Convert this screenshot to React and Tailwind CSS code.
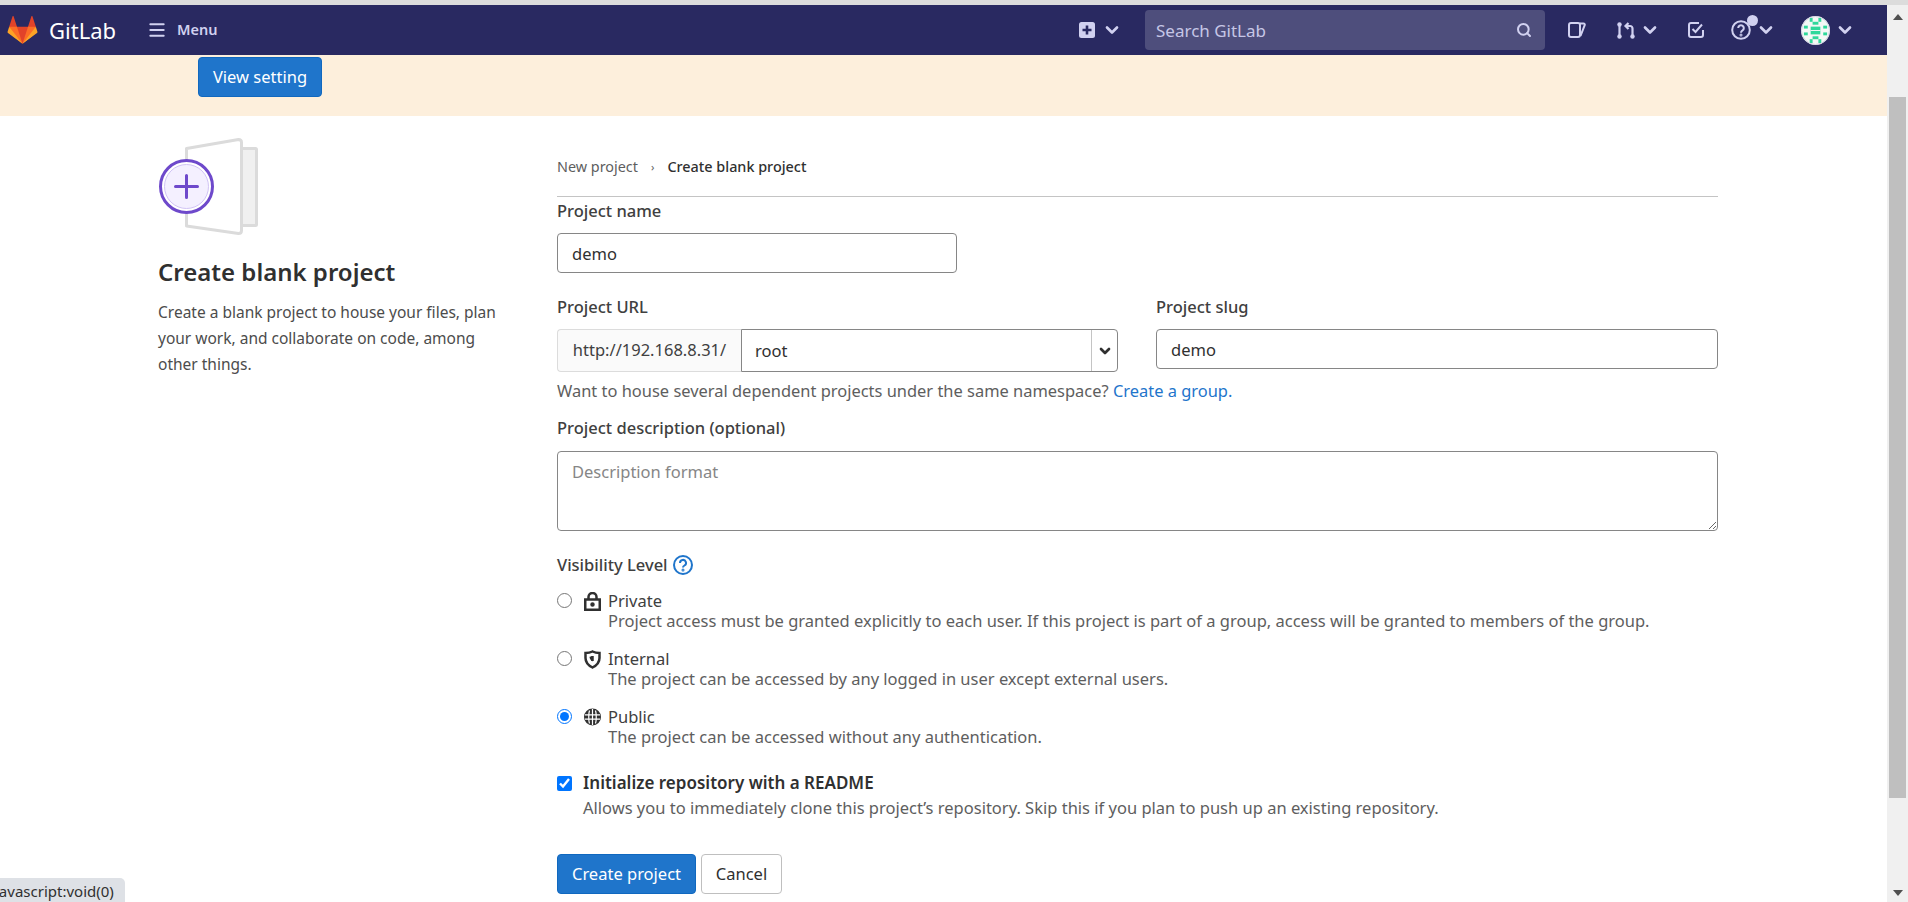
import React from 'react';
import { ChevronDown, Search, Menu } from 'lucide-react';

const Chev = ({ className = '' }) => <ChevronDown className={`w-5 h-5 ${className}`} strokeWidth={3.2} />;

const Logo = () => (
  <svg width="31" height="30" viewBox="0 0 36 36">
    <path fill="#e24329" d="M2 14l9.38 9v-9l-4-12.28c-.205-.632-1.176-.632-1.38 0z" />
    <path fill="#e24329" d="M34 14l-9.38 9v-9l4-12.28c.205-.632 1.176-.632 1.38 0z" />
    <path fill="#e24329" d="M18,34.38 3,14 33,14 Z" />
    <path fill="#fc6d26" d="M18,34.38 11.38,14 2,14 6,25Z" />
    <path fill="#fc6d26" d="M18,34.38 24.62,14 34,14 30,25Z" />
    <path fill="#fca326" d="M2 14L.1 20.16c-.18.565 0 1.2.5 1.56l17.42 12.66z" />
    <path fill="#fca326" d="M34 14l1.9 6.16c.18.565 0 1.2-.5 1.56L18 34.38z" />
  </svg>
);

const Avatar = () => (
  <svg width="29" height="29" viewBox="0 0 30 30">
    <circle cx="15" cy="15" r="15" fill="#f4f8f6" />
    <g fill="#2fd89b">
      <rect x="9" y="2" width="3" height="4" /><rect x="18" y="2" width="3" height="4" />
      <rect x="12" y="6" width="6" height="3" />
      <rect x="3" y="10" width="4" height="3" /><rect x="23" y="10" width="4" height="3" />
      <rect x="10" y="11" width="10" height="8" />
      <rect x="3" y="17" width="4" height="3" /><rect x="23" y="17" width="4" height="3" />
      <rect x="12" y="21" width="6" height="3" />
      <rect x="9" y="24" width="3" height="4" /><rect x="18" y="24" width="3" height="4" />
    </g>
    <path d="M10 15h10" stroke="#f4f8f6" strokeWidth="1" />
    <circle cx="15" cy="15" r="14.500" fill="none" stroke="#cfcfe0" />
  </svg>
);

const VisRow = ({ checked, icon, title, desc }) => (
  <div className="flex h-[58px]">
    <input type="radio" name="vis" defaultChecked={checked} className="w-[15px] h-[15px] mt-[4px] accent-[#0075ff]" />
    <div className="ml-[12px] w-[17px] pt-[3px] text-[#303030]">{icon}</div>
    <div className="ml-[7px]">
      <div className="text-[#404040] pt-[2px] leading-[20px]">{title}</div>
      <div className="text-[#5e5e5e] leading-[19px]">{desc}</div>
    </div>
  </div>
);

export default function App() {
  return (
    <div className="h-screen overflow-hidden flex flex-col bg-white relative text-[16.5px] text-[#303030]" style={{ fontFamily: '"Noto Sans", sans-serif' }}>
      <div className="h-[5px] bg-[#dcdcdc] shrink-0" />
      <div className="flex flex-1 min-h-0">
        <div className="flex-1 min-w-0">
          {/* Navbar */}
          <nav className="h-[50px] bg-[#292961] flex items-center">
            <div className="ml-[7px]"><Logo /></div>
            <span className="ml-[11px] text-[22px] text-white">GitLab</span>
            <Menu className="ml-[31px] w-[20px] h-[20px] text-[#d1d1f0]" strokeWidth={2.4} />
            <span className="ml-[10px] text-[14.5px] font-semibold text-[#d1d1f0]">Menu</span>
            <div className="ml-auto flex items-center text-[#d1d1f0]">
              <svg width="16" height="16" viewBox="0 0 16 16"><rect x="0" y="0" width="16" height="16" rx="2.500" fill="#d1d1f0" /><path d="M8 3.500v9M3.500 8h9" stroke="#292961" strokeWidth="2.600" /></svg>
              <Chev className="ml-[7px]" />
              <div className="ml-[23px] w-[400px] h-[40px] rounded-[4px] bg-[#4e4e7c] flex items-center pl-[11px] pr-[13px]">
                <span className="text-[17px] pt-[2px] text-[#c6c6e6]">Search GitLab</span>
                <Search className="ml-auto w-[16px] h-[16px] text-[#d1d1f0]" strokeWidth={3} />
              </div>
              <svg className="ml-[23px]" width="18" height="16" viewBox="0 0 18 16" fill="none" stroke="#d1d1f0" strokeWidth="2"><rect x="1" y="1" width="11" height="14" rx="2" /><path d="M12 1.500h3.500c1 0 1.500.8 1.200 1.600L12.500 14" /></svg>
              <svg className="ml-[31px]" width="18" height="17" viewBox="0 0 18 17" fill="none" stroke="#d1d1f0" strokeWidth="2.200"><circle cx="2.500" cy="2.500" r="2.200" fill="#d1d1f0" stroke="none" /><circle cx="2.500" cy="14.500" r="2.200" fill="#d1d1f0" stroke="none" /><circle cx="15.500" cy="14.500" r="2.200" fill="#d1d1f0" stroke="none" /><path d="M2.500 3v11M15.500 13V6.500c0-1.500-1-2.500-2.500-2.500H9M11.500 1 8.500 4l3 3" /></svg>
              <Chev className="ml-[5px]" />
              <svg className="ml-[28px]" width="16" height="16" viewBox="0 0 16 16" fill="none" stroke="#d1d1f0" strokeWidth="2"><path d="M15 8v5a2 2 0 0 1-2 2H3a2 2 0 0 1-2-2V3a2 2 0 0 1 2-2h8" /><path d="M4.500 7l3 3L14 2.500" /></svg>
              <div className="ml-[27px] relative w-[20px] h-[20px]">
                <svg width="20" height="20" viewBox="0 0 20 20" fill="none" stroke="#d1d1f0" strokeWidth="2"><circle cx="10" cy="10" r="8.800" /><path d="M7.200 8a2.800 2.800 0 1 1 4.300 2.400c-1 .6-1.500 1-1.500 2.300" /><circle cx="10" cy="15" r="0.500" /></svg>
                <span className="absolute -top-[5px] -right-[7px] w-[11px] h-[11px] rounded-full bg-[#d1d1f0]" />
              </div>
              <Chev className="ml-[5px]" />
              <div className="ml-[25px]"><Avatar /></div>
              <Chev className="ml-[5px] mr-[32px]" />
            </div>
          </nav>

          {/* Banner */}
          <div className="h-[61px] bg-[#fdefdc] pl-[198px] pt-[2px]">
            <button className="w-[124px] h-[40px] rounded-[4px] bg-[#1f75cb] border border-[#1068bf] text-white">View setting</button>
          </div>

          {/* Content */}
          <div className="flex">
            <div className="w-[557px] pl-[158px] pt-[20px] shrink-0">
              <svg width="102" height="100" viewBox="0 0 102 100" fill="none" className="block">
                <path d="M84 12.500h13.500a1 1 0 0 1 1 1v75a1 1 0 0 1-1 1H84" fill="#f0f0f0" stroke="#dbdbdb" strokeWidth="3" />
                <path d="M28.500 12.500l52-9c2 0 3 1 3 3v88c0 2-1 3-3 3l-52-7.500z" fill="#fff" stroke="#dbdbdb" strokeWidth="3" strokeLinejoin="round" />
                <circle cx="28.500" cy="50.500" r="26" fill="#fff" stroke="#6e49cb" strokeWidth="3" />
                <circle cx="28.500" cy="50.500" r="22" fill="#f4f0ff" stroke="#d1c4f5" />
                <path d="M28.500 39.500v22M17.500 50.500h22" stroke="#6e49cb" strokeWidth="3" strokeLinecap="round" />
              </svg>
              <h1 className="mt-[20px] text-[24px] leading-[32px] font-semibold text-[#303030]">Create blank project</h1>
              <p className="mt-[11px] text-[15.5px] leading-[26px] text-[#4c4c4c] w-[350px]">Create a blank project to house your files, plan your work, and collaborate on code, among other things.</p>
            </div>

            <div className="w-[1161px] pt-[40px]">
              <div className="h-[41px] border-b border-[#c4c4c4] flex items-start text-[14.4px] leading-[22px]">
                <span className="text-[#5e5e5e]">New project</span>
                <span className="mx-[13px] text-[#5e5e5e] text-[11px]">›</span>
                <span className="text-[#303030] font-medium">Create blank project</span>
              </div>
              <label className="block mt-[3px] leading-[22px] font-medium text-[#404040]">Project name</label>
              <input readOnly value="demo" className="block mt-[11px] w-[400px] h-[40px] border border-[#868686] rounded-[4px] px-[14px] text-[#303030] outline-none" />

              <div className="flex mt-[23px]">
                <div className="w-[561px]">
                  <label className="block leading-[22px] font-medium text-[#404040]">Project URL</label>
                  <div className="flex mt-[11px] h-[43px]">
                    <div className="w-[184px] bg-[#fafafa] border border-r-0 border-[#dcdcdc] rounded-l-[4px] flex items-center justify-center text-[#404040]">http://192.168.8.31/</div>
                    <div className="w-[377px] border border-[#868686] rounded-r-[4px] flex items-center">
                      <span className="flex-1 pl-[13px] pt-[2px] text-[#303030]">root</span>
                      <div className="w-[26px] h-full border-l border-[#c4c4c4] flex items-center justify-center text-[#303030]"><ChevronDown className="w-4 h-4" strokeWidth={4} /></div>
                    </div>
                  </div>
                </div>
                <div className="ml-[38px] flex-1">
                  <label className="block leading-[22px] font-medium text-[#404040]">Project slug</label>
                  <input readOnly value="demo" className="block mt-[11px] w-full h-[40px] border border-[#868686] rounded-[4px] px-[14px] text-[#303030] outline-none" />
                </div>
              </div>
              <p className="mt-[8px] text-[16.45px] leading-[22px] text-[#5e5e5e]">Want to house several dependent projects under the same namespace? <a className="text-[#1f75cb]">Create a group.</a></p>

              <label className="block mt-[15px] leading-[22px] font-medium text-[#404040]">Project description (optional)</label>
              <textarea readOnly placeholder="Description format" className="block mt-[12px] w-full h-[80px] border border-[#868686] rounded-[4px] px-[14px] py-[8px] placeholder-[#868686] outline-none" />

              <div className="flex items-center mt-[23px] h-[22px]">
                <span className="font-medium text-[#404040]">Visibility Level</span>
                <svg className="ml-[5px]" width="20" height="20" viewBox="0 0 20 20" fill="none" stroke="#1f75cb" strokeWidth="2"><circle cx="10" cy="10" r="9" /><path d="M7 8a3 3 0 1 1 4.500 2.500c-1 .6-1.500 1-1.500 2" /><circle cx="10" cy="15" r="0.500" /></svg>
              </div>
              <div className="mt-[13px]">
                <VisRow
                  icon={<svg width="17" height="19" viewBox="0 0 17 19" fill="none" stroke="currentColor" strokeWidth="2.500"><rect x="1.250" y="7.500" width="14.500" height="10.250" /><path d="M4.500 7V5a4 4 0 0 1 8 0v2" /><circle cx="8.500" cy="12.500" r="1" fill="currentColor" /></svg>}
                  title="Private"
                  desc="Project access must be granted explicitly to each user. If this project is part of a group, access will be granted to members of the group."
                />
                <VisRow
                  icon={<svg width="17" height="19" viewBox="0 0 17 19" fill="none" stroke="currentColor" strokeWidth="2.500"><path d="M8.500 1.500c2 1 4 1.500 7 1.500v5c0 4-3 7.500-7 9.500-4-2-7-5.500-7-9.500V3c3 0 5-.5 7-1.500z" /><path d="M8.500 6v5" /><path d="M8.500 6c-1.500.5-2.500.7-3 .7 0 2 1.500 3.800 3 4.800z" fill="currentColor" stroke="none" /></svg>}
                  title="Internal"
                  desc="The project can be accessed by any logged in user except external users."
                />
                <VisRow
                  checked
                  icon={<svg width="17" height="19" viewBox="0 0 17 19" fill="none"><circle cx="8.500" cy="9" r="8.500" fill="currentColor" /><path d="M1 6.800h15M1 11.200h15M8.500 1v16M5.500 2.500c-1 3-1 10 0 13M11.500 2.500c1 3 1 10 0 13" stroke="#fff" strokeWidth="1.200" /></svg>}
                  title="Public"
                  desc="The project can be accessed without any authentication."
                />
              </div>

              <div className="flex items-center mt-[9px] h-[22px]">
                <input type="checkbox" defaultChecked className="w-[15px] h-[15px] accent-[#0075ff]" />
                <span className="ml-[11px] text-[17px] font-semibold text-[#303030]">Initialize repository with a README</span>
              </div>
              <p className="ml-[26px] mt-[3px] leading-[22px] text-[#5e5e5e]">Allows you to immediately clone this project’s repository. Skip this if you plan to push up an existing repository.</p>

              <div className="flex mt-[35px]">
                <button className="w-[139px] h-[40px] rounded-[4px] bg-[#1f75cb] border border-[#1068bf] text-white">Create project</button>
                <button className="ml-[5px] w-[81px] h-[40px] rounded-[4px] bg-white border border-[#bfbfbf] text-[#303030]">Cancel</button>
              </div>
            </div>
          </div>
        </div>

        {/* Scrollbar */}
        <div className="w-[21px] shrink-0 bg-[#f0f0f0] flex flex-col items-center">
          <div className="h-[23px] flex items-center justify-center text-[#505050]">
            <svg width="10" height="6" viewBox="0 0 10 6"><path d="M5 0l5 6H0z" fill="currentColor" /></svg>
          </div>
          <div className="mt-[69px] w-[17px] h-[701px] bg-[#bfbfbf]" />
          <div className="mt-auto h-[12px] text-[#505050]">
            <svg width="10" height="6" viewBox="0 0 10 6"><path d="M5 6L0 0h10z" fill="currentColor" /></svg>
          </div>
        </div>
      </div>

      {/* Link status tooltip */}
      <div className="absolute left-0 bottom-0 h-[24px] w-[125px] bg-[#dee1e6] rounded-tr-[5px] text-[15px] leading-[26px] text-[#303030] overflow-hidden whitespace-nowrap">
        <span className="block -ml-[5px]">javascript:void(0)</span>
      </div>
    </div>
  );
}
